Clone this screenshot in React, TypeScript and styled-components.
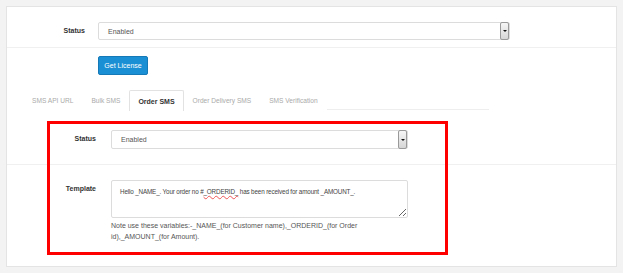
import React from "react";
import styled, { createGlobalStyle } from "styled-components";

const Global = createGlobalStyle`
  html, body { margin: 0; padding: 0; background: #f3f3f3; }
  body { font-family: "Liberation Sans", Arial, sans-serif; }
  * { box-sizing: border-box; }
`;

const Panel = styled.div`
  position: relative;
  margin: 6px 0 0 6px;
  width: 611px;
  height: 261px;
  background: #fff;
  border: 1px solid #e4e4e4;
`;

const Row = styled.div<{ $pt: number; $pb: number; $line?: boolean; $label: number; $gap: number }>`
  display: grid;
  grid-template-columns: ${(p) => p.$label}px auto;
  column-gap: ${(p) => p.$gap}px;
  align-items: start;
  padding: ${(p) => p.$pt}px 0 ${(p) => p.$pb}px 0;
  border-bottom: ${(p) => (p.$line ? "1px solid #f0f0f0" : "none")};
`;

const Label = styled.div<{ $top: number }>`
  text-align: right;
  font-size: 7px;
  font-weight: bold;
  color: #333;
  padding-top: ${(p) => p.$top}px;
`;

const Select = styled.div<{ $w: number; $h: number }>`
  position: relative;
  width: ${(p) => p.$w}px;
  height: ${(p) => p.$h}px;
  border: 1px solid #dcdcdc;
  border-radius: 2px;
  background: #fff;
  font-size: 7px;
  color: #555;
  display: flex;
  align-items: center;
  padding-left: 9px;
`;

const Arrow = styled.div`
  position: absolute;
  right: 0;
  top: -1px;
  bottom: -1px;
  width: 9px;
  border: 1px solid #9a9a9a;
  border-radius: 2px;
  background: linear-gradient(#f6f6f6, #d6d6d6);
  display: flex;
  align-items: center;
  justify-content: center;
  &::after {
    content: "";
    border-left: 2px solid transparent;
    border-right: 2px solid transparent;
    border-top: 2px solid #111;
  }
`;

const Button = styled.button`
  width: 50px;
  height: 19px;
  padding: 0;
  border: 1px solid #1579b8;
  border-radius: 2px;
  background: #1b8fd4;
  color: #fff;
  font-family: "Liberation Sans", Arial, sans-serif;
  font-size: 7px;
`;

const Tabs = styled.div`
  display: flex;
  margin: 15px 0 0 16px;
  width: 466px;
  height: 20px;
  border-bottom: 1px solid #eeeeee;
`;

const Tab = styled.div<{ $active?: boolean }>`
  padding: 0 8px;
  height: ${(p) => (p.$active ? "21px" : "20px")};
  display: flex;
  align-items: center;
  font-size: ${(p) => (p.$active ? "7px" : "6.6px")};
  font-weight: ${(p) => (p.$active ? "bold" : "normal")};
  color: ${(p) => (p.$active ? "#333" : "#aaa")};
  background: #fff;
  border: 1px solid ${(p) => (p.$active ? "#e2e2e2" : "transparent")};
  border-bottom: none;
  border-radius: 2px 2px 0 0;
`;

const Textarea = styled.div`
  width: 297px;
  height: 38px;
  border: 1px solid #dcdcdc;
  border-radius: 2px;
  padding: 7px 8px;
  font-size: 6.3px;
  letter-spacing: -0.15px;
  color: #444;
  resize: vertical;
  overflow: hidden;
  white-space: nowrap;
`;

const Wavy = styled.span`
  text-decoration: underline wavy #e55;
  text-decoration-thickness: 1px;
  text-underline-offset: 1px;
`;

const Note = styled.div`
  width: 260px;
  margin-top: 2px;
  font-size: 7px;
  line-height: 11px;
  color: #555;
`;

const Annotation = styled.div`
  position: absolute;
  left: 40px;
  top: 114px;
  width: 401px;
  height: 134px;
  border: 3px solid #ff0000;
  pointer-events: none;
`;

const Field = styled.div`
  position: relative;
`;

export default function App() {
  return (
    <>
      <Global />
      <Panel>
        <Row $pt={15} $pb={7} $line $label={78} $gap={13}>
          <Label $top={5}>Status</Label>
          <Select $w={412} $h={18}>
            Enabled
            <Arrow />
          </Select>
        </Row>
        <Row $pt={8} $pb={0} $label={78} $gap={13}>
          <div />
          <Button>Get License</Button>
        </Row>
        <Tabs>
          <Tab>SMS API URL</Tab>
          <Tab>Bulk SMS</Tab>
          <Tab $active>Order SMS</Tab>
          <Tab>Order Delivery SMS</Tab>
          <Tab>SMS Verification</Tab>
        </Tabs>
        <Row $pt={20} $pb={15} $line $label={89} $gap={15}>
          <Label $top={5}>Status</Label>
          <Select $w={297} $h={19}>
            Enabled
            <Arrow />
          </Select>
        </Row>
        <Row $pt={15} $pb={0} $label={89} $gap={15}>
          <Label $top={5}>Template</Label>
          <Field>
            <Textarea>
              Hello _NAME_. Your order no #<Wavy>_ORDERID_</Wavy> has been received for amount _AMOUNT_.
            </Textarea>
            <Note>
              Note use these variables:-_NAME_(for Customer name),_ORDERID_(for Order id),_AMOUNT_(for Amount).
            </Note>
          </Field>
        </Row>
        <Annotation />
      </Panel>
    </>
  );
}
